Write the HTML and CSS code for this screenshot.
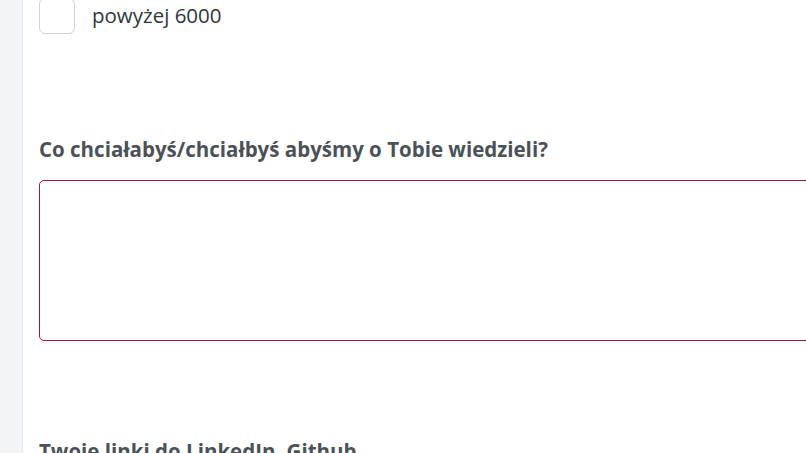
FILE: index.html
```html
<!DOCTYPE html>
<html lang="pl">
<head>
<meta charset="utf-8">
<link rel="stylesheet" href="styles.css">
</head>
<body>
<div class="layout">
  <aside class="side"></aside>
  <main class="main">
    <label class="option">
      <span class="box"></span>
      <span class="option-text">powyżej 6000</span>
    </label>
    <section class="field field-about">
      <h3 class="field-label">Co chciałabyś/chciałbyś abyśmy o Tobie wiedzieli?</h3>
      <div class="textarea"></div>
    </section>
    <section class="field field-links">
      <h3 class="field-label">Twoje linki do LinkedIn, Github</h3>
    </section>
  </main>
</div>
</body>
</html>
```

FILE: styles.css
```css
html, body {
  margin: 0;
  padding: 0;
  background: #ffffff;
  overflow: hidden;
  height: 453px;
}
.layout {
  display: flex;
  height: 453px;
}
.side {
  width: 22px;
  flex: none;
  background: #f3f4f6;
  border-right: 1px solid #e5e7eb;
}
.main {
  flex: 1;
  padding-left: 16px;
  font-family: "Open Sans", "Noto Sans", sans-serif;
  color: #374151;
  min-width: 0;
}
.option {
  display: flex;
  align-items: center;
  gap: 17px;
  margin-top: -3px;
  height: 38px;
}
.box {
  width: 34px;
  height: 34px;
  border: 1px solid #d1d5db;
  border-radius: 6px;
  background: #fff;
  flex: none;
}
.option-text {
  font-size: 20.5px;
  color: #2f3640;
  margin-top: -2px;
}
.field-label {
  margin: 0;
  font-size: 20.5px;
  font-weight: 700;
  color: #4b5158;
  line-height: 28px;
}
.field-about {
  margin-top: 100px;
}
.textarea {
  margin-top: 17px;
  width: 820px;
  height: 159px;
  border: 1px solid #a3173d;
  border-radius: 5px;
}
.field-links {
  margin-top: 96px;
}
```
